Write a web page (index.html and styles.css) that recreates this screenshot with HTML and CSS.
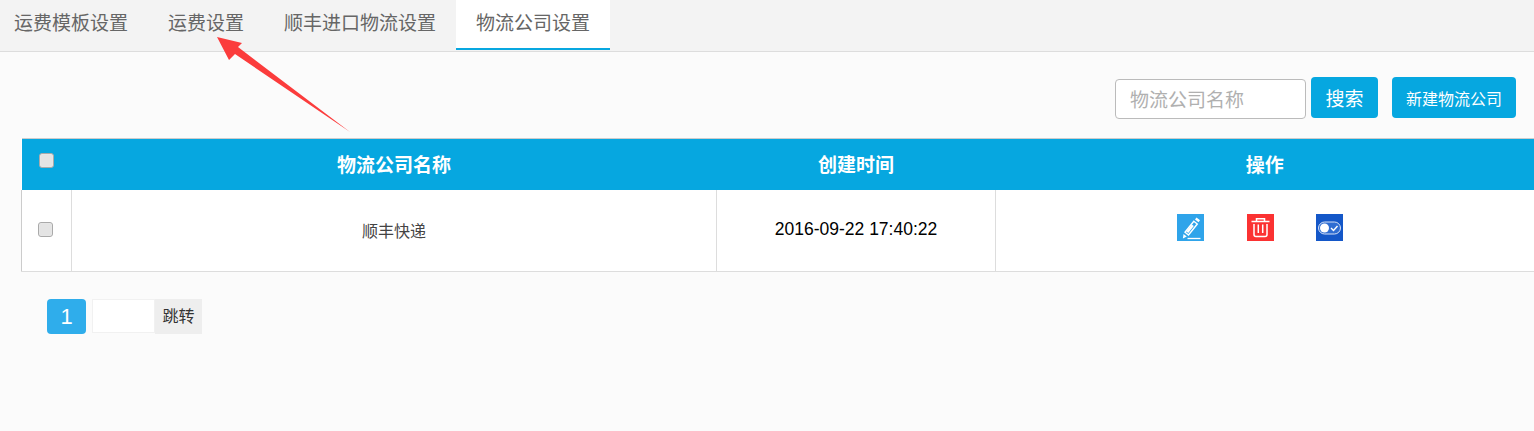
FILE: index.html
```html
<!DOCTYPE html>
<html lang="zh-CN">
<head>
    <meta charset="UTF-8">
    <meta name="viewport" content="width=device-width, initial-scale=1.0">
    <title>物流公司设置</title>
    <link rel="stylesheet" href="styles.css">
</head>
<body>

    <!-- 顶部标签 -->
    <nav class="tabs">
        <a class="tab">运费模板设置</a>
        <a class="tab">运费设置</a>
        <a class="tab">顺丰进口物流设置</a>
        <a class="tab active">物流公司设置</a>
    </nav>

    <!-- 搜索栏 -->
    <form class="toolbar">
        <input class="search-input" type="text" placeholder="物流公司名称">
        <button class="btn btn-search" type="button">搜索</button>
        <button class="btn btn-new" type="button">新建物流公司</button>
    </form>

    <table class="list">
        <colgroup>
            <col class="col-check">
            <col class="col-name">
            <col class="col-time">
            <col>
        </colgroup>
        <thead>
            <tr>
                <th class="check-head"><input class="check" type="checkbox"></th>
                <th>物流公司名称</th>
                <th>创建时间</th>
                <th>操作</th>
            </tr>
        </thead>
        <tbody>
            <tr>
                <td><input class="check" type="checkbox"></td>
                <td class="name">顺丰快递</td>
                <td class="time">2016-09-22 17:40:22</td>
                <td>
                    <div class="actions">
                        <svg class="icon" viewBox="0 0 27 27">
                            <rect width="27" height="27" fill="#2fa4ea"/>
                            <path d="M19.500 3.500l3.500 2.800-1.500 1.900-3.500-2.800z" fill="#fff"/>
                            <path d="M16.800 7.200l3.500 2.800-8.800 11-3.500-2.800z" fill="none" stroke="#fff" stroke-width="1.400"/>
                            <path d="M14.800 10.500l2 1.600-5.500 6.900-2-1.600z" fill="#fff"/>
                            <path d="M6.500 20l3.300 2.600-3.900 1.800z" fill="#fff"/>
                            <path d="M10.500 24.500h13" stroke="#fff" stroke-width="1.300"/>
                        </svg>
                        <svg class="icon" viewBox="0 0 27 27">
                            <rect width="27" height="27" fill="#fb3232"/>
                            <path d="M4.500 7.500h18M9.500 7V4.800h8V7" fill="none" stroke="#fff" stroke-width="1.500"/>
                            <path d="M7 10v10.500q0 2 2 2h9q2 0 2-2V10M11.300 10.500v8.500M15.700 10.500v8.500" fill="none" stroke="#fff" stroke-width="1.500"/>
                        </svg>
                        <svg class="icon" viewBox="0 0 27 27">
                            <rect width="27" height="27" fill="#1457c8"/>
                            <rect x="2.500" y="8" width="22" height="12" rx="6" fill="#2f6dd2" stroke="#d5e1f6" stroke-width="1"/>
                            <circle cx="8.500" cy="14" r="4.500" fill="#fff"/>
                            <path d="M15 14l2.500 2.500 4-4.500" fill="none" stroke="#fff" stroke-width="1.400"/>
                        </svg>
                    </div>
                </td>
            </tr>
        </tbody>
    </table>

    <!-- 分页 -->
    <div class="pager">
        <a class="page current">1</a>
        <input class="page-input" type="text">
        <a class="page-go">跳转</a>
    </div>

    <!-- 截图上的红色箭头 -->
    <svg class="arrow" width="1534" height="431" viewBox="0 0 1534 431">
        <polygon points="217,37 242,43 238,47 350,132 235,54 229,60" fill="#fb3c3c"/>
    </svg>

</body>
</html>
```

FILE: styles.css
```css
/* 页面基础 */
body {
    margin: 0;
    background-color: #fbfbfb;
    color: #333;
    font-family: "Liberation Sans", "Noto Sans CJK SC", sans-serif;
    overflow: hidden;
}

/* 顶部标签 */
.tabs {
    display: flex;
    height: 51px;
    padding-left: 0;
    background-color: #f3f3f3;
    border-bottom: 1px solid #ddd;
}

.tab {
    height: 50px;
    padding: 0 20px;
    box-sizing: border-box;
    font-size: 19px;
    line-height: 48px;
    color: #666;
}

.tab:first-child {
    margin-left: -6px;
}

.tab.active {
    background-color: #fff;
    border-bottom: 2px solid #08a7e0;
}

/* 搜索栏 */
.toolbar {
    display: flex;
    justify-content: flex-end;
    align-items: flex-start;
    height: 61px;
    padding: 25px 18px 0 0;
}

.search-input {
    width: 191px;
    height: 40px;
    box-sizing: border-box;
    margin-top: 2px;
    padding: 4px 14px 0;
    border: 1px solid #bbb;
    border-radius: 4px;
    background-color: #fff;
    font-family: inherit;
    font-size: 19px;
}

.search-input::placeholder {
    color: #b0b0b0;
}

.btn {
    height: 41px;
    padding: 0;
    border: none;
    border-radius: 4px;
    background-color: #06a7e0;
    color: #fff;
    font-family: inherit;
}

.btn-search {
    width: 67px;
    margin-left: 5px;
    font-size: 19px;
}

.btn-new {
    width: 124px;
    margin-left: 14px;
    font-size: 16px;
}

/* 列表 */
.list {
    width: 1513px;
    margin-left: 21px;
    border-collapse: collapse;
    table-layout: fixed;
    border-top: 1px solid #ccc;
    background-color: #fff;
}

.col-check {
    width: 50px;
}

.col-name {
    width: 645px;
}

.col-time {
    width: 279px;
}

.list th {
    height: 49px;
    padding: 0 0 2px;
    background-color: #06a7e0;
    color: #fff;
    font-size: 19px;
    text-align: center;
}

.list td {
    height: 79px;
    padding: 0 0 2px;
    border-left: 1px solid #ddd;
    border-bottom: 1px solid #ddd;
    text-align: center;
}

.list td:first-child {
    border-left: 1px solid #ccc;
}

.check {
    appearance: none;
    display: block;
    width: 15px;
    height: 15px;
    margin: 0 0 1px 16px;
    border: 1px solid #aaa;
    border-radius: 3px;
    background-color: #e4e4e4;
    box-shadow: inset 0 0 1px #fff;
}

.check-head .check {
    margin: 0 0 6px 17px;
}

.name {
    font-size: 16px;
    color: #444;
}

.time {
    font-size: 17.500px;
    color: #000;
}

.actions {
    display: flex;
    justify-content: center;
    margin: -4px 0 0 -10px;
}

.icon {
    display: block;
    width: 27px;
    height: 27px;
    margin: 0 21px;
}

.icon:first-child {
    margin: 0 22px 0 20px;
}

/* 分页 */
.pager {
    display: flex;
    align-items: flex-start;
    margin: 27px 0 0 47px;
}

.page {
    width: 39px;
    height: 35px;
    border-radius: 4px;
    background-color: #2fadeb;
    color: #fff;
    font-size: 22px;
    line-height: 35px;
    text-align: center;
}

.page-input {
    width: 63px;
    height: 34px;
    box-sizing: border-box;
    margin-left: 6px;
    padding: 0;
    border: 1px solid #f1f1f1;
    background-color: #fff;
}

.page-go {
    width: 47px;
    height: 35px;
    background-color: #eee;
    font-size: 16px;
    line-height: 35px;
    text-align: center;
}

/* 箭头 */
.arrow {
    position: absolute;
    left: 0;
    top: 0;
    pointer-events: none;
}
```
